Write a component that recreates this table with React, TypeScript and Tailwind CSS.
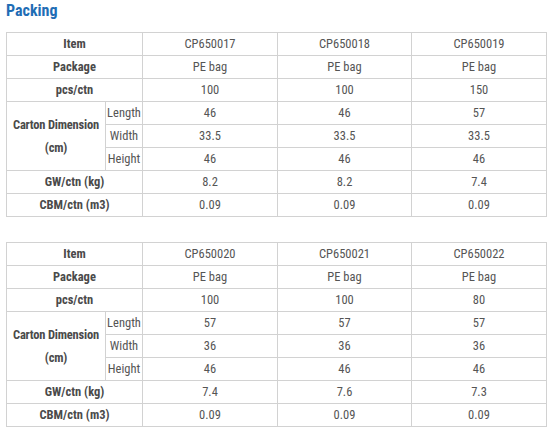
import React from "react";

type T = {
  items: string[];
  pkg: string[];
  pcs: string[];
  len: string[];
  wid: string[];
  hei: string[];
  gw: string[];
  cbm: string[];
};

const t1: T = {
  items: ["CP650017", "CP650018", "CP650019"],
  pkg: ["PE bag", "PE bag", "PE bag"],
  pcs: ["100", "100", "150"],
  len: ["46", "46", "57"],
  wid: ["33.5", "33.5", "33.5"],
  hei: ["46", "46", "46"],
  gw: ["8.2", "8.2", "7.4"],
  cbm: ["0.09", "0.09", "0.09"],
};
const t2: T = {
  items: ["CP650020", "CP650021", "CP650022"],
  pkg: ["PE bag", "PE bag", "PE bag"],
  pcs: ["100", "100", "80"],
  len: ["57", "57", "57"],
  wid: ["36", "36", "36"],
  hei: ["46", "46", "46"],
  gw: ["7.4", "7.6", "7.3"],
  cbm: ["0.09", "0.09", "0.09"],
};

const td = "border border-[#d2d2d2] h-[23px] p-0 text-center align-middle";
const th = td + " font-bold text-[#4a4a4a]";

function Vals({ v }: { v: string[] }) {
  return (
    <>
      {v.map((x, i) => (
        <td key={i} className={td}>
          {x}
        </td>
      ))}
    </>
  );
}

function Table({ d }: { d: T }) {
  return (
    <table className="border-collapse table-fixed w-[540px] text-[12.5px] leading-none text-[#555]">
      <colgroup>
        <col className="w-[99px]" />
        <col className="w-[37px]" />
        <col className="w-[135px]" />
        <col className="w-[134px]" />
        <col className="w-[135px]" />
      </colgroup>
      <tbody>
        <tr>
          <td colSpan={2} className={th}>Item</td>
          <Vals v={d.items} />
        </tr>
        <tr>
          <td colSpan={2} className={th}>Package</td>
          <Vals v={d.pkg} />
        </tr>
        <tr>
          <td colSpan={2} className={th}>pcs/ctn</td>
          <Vals v={d.pcs} />
        </tr>
        <tr>
          <td rowSpan={3} className={th + " leading-[23px] tracking-[-0.2px]"}>
            Carton Dimension
            <br />
            (cm)
          </td>
          <td className={td}>Length</td>
          <Vals v={d.len} />
        </tr>
        <tr>
          <td className={td}>Width</td>
          <Vals v={d.wid} />
        </tr>
        <tr>
          <td className={td}>Height</td>
          <Vals v={d.hei} />
        </tr>
        <tr>
          <td colSpan={2} className={th}>GW/ctn (kg)</td>
          <Vals v={d.gw} />
        </tr>
        <tr>
          <td colSpan={2} className={th}>CBM/ctn (m3)</td>
          <Vals v={d.cbm} />
        </tr>
      </tbody>
    </table>
  );
}

export default function App() {
  return (
    <div className="bg-white w-[554px] h-[438px] pl-[6px] font-['Roboto_Condensed','Roboto',sans-serif] font-stretch-condensed">
      <div className="h-[32px] pt-[1px] text-[16px] font-bold text-[#1f6db5] leading-[20px]">Packing</div>
      <Table d={t1} />
      <div className="h-[25px]" />
      <Table d={t2} />
    </div>
  );
}
